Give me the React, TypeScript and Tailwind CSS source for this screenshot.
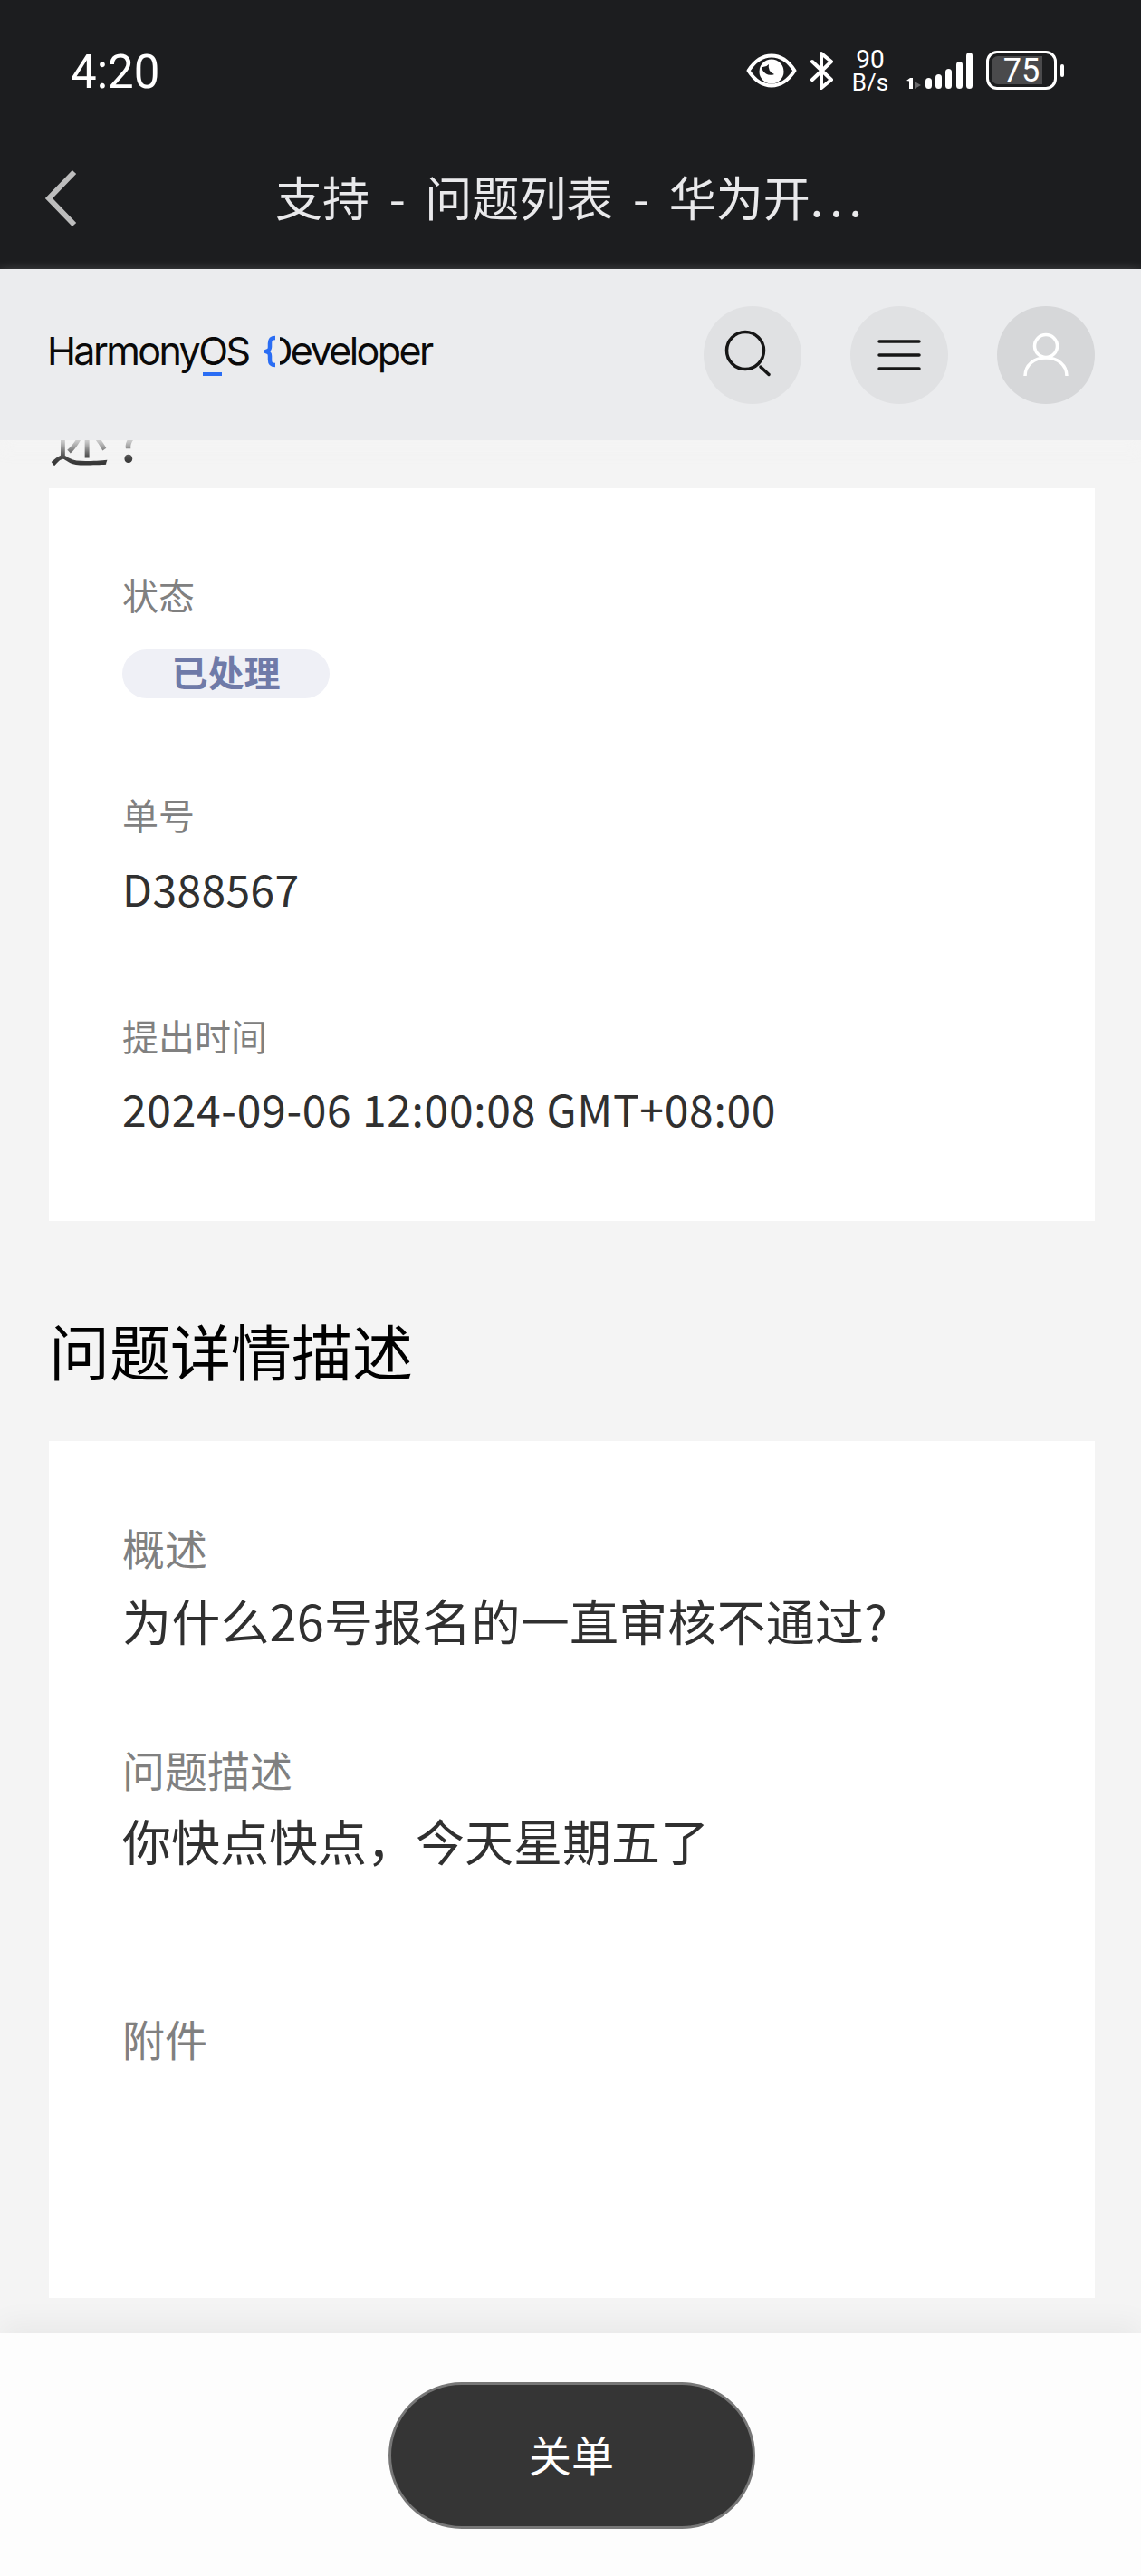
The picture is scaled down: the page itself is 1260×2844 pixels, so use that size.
const FONT = "font-['Noto_Sans_CJK_SC','Noto_Sans',sans-serif]";

function Label({ children, big, className = "" }: { children: string; big?: boolean; className?: string }) {
  return (
    <div className={`h-[60px] leading-[56px] text-[#808080] ${big ? "text-[47px]" : "text-[40px]"} ${className}`}>{children}</div>
  );
}

function StatusIcons() {
  return (
    <div className="flex items-start text-white">
      <svg width="56" height="38" viewBox="0 0 56 38" className="mt-[59px] ml-[-1px]">
        <path d="M2.500 19C10 7.500 18.500 2.500 28 2.500S46 7.500 53.500 19C46 30.500 37.500 35.500 28 35.500S10 30.500 2.500 19Z" fill="none" stroke="white" strokeWidth="4" strokeLinejoin="round" />
        <circle cx="28" cy="20" r="13.500" fill="white" />
        <path d="M17 15a10 10 0 0 0 14 8 9 9 0 0 1-6-11 9 9 0 0 1-8 3Z" fill="#1c1d1f" />
      </svg>
      <svg width="28" height="42" viewBox="0 0 28 42" className="mt-[57px] ml-[14px]">
        <path d="M3 11 24 31 13 40V2L24 11 3 31" fill="none" stroke="white" strokeWidth="4" strokeLinejoin="round" strokeLinecap="round" />
      </svg>
      <div className="mt-[54px] ml-[18px] w-[42px] text-center font-['Roboto',sans-serif]">
        <div className="h-[24px] text-[28px] leading-[24px]">90</div>
        <div className="h-[26px] text-[26px] leading-[26px] whitespace-nowrap">B/s</div>
      </div>
      <svg width="78" height="44" viewBox="0 0 78 44" className="mt-[56px] ml-[18px]">
        <path d="M1 33 5 30H8V42H4V33.500Z" fill="white" />
        <path d="M10 34V42L17 38Z" fill="#6a6a6c" />
        <rect x="22" y="30" width="7" height="12" rx="3.500" fill="white" />
        <rect x="33" y="26" width="7" height="16" rx="3.500" fill="white" />
        <rect x="44" y="20" width="7" height="22" rx="3.500" fill="white" />
        <rect x="56" y="12" width="7" height="30" rx="3.500" fill="white" />
        <rect x="67" y="2" width="7" height="40" rx="3.500" fill="white" />
      </svg>
      <div className="relative mt-[56px] ml-[11px] h-[43px] w-[78px] overflow-hidden rounded-[12px] border-[3px] border-white">
        <div className="absolute left-[3px] top-[3px] bottom-[3px] w-[56px] rounded-l-[7px] bg-[#4a4a4c]" />
        <div className="absolute inset-0 flex items-center justify-center font-['Roboto',sans-serif] text-[36px] leading-none">75</div>
      </div>
      <div className="mt-[71px] ml-[4px] h-[14px] w-[4px] rounded-full bg-white" />
    </div>
  );
}

function Logo() {
  return (
    <div className="mb-[9px] flex items-baseline font-['Inter',sans-serif] text-[43px] leading-[50px] tracking-[-2.600px] text-[#0a0a0a] whitespace-nowrap">
      <span className="relative">
        HarmonyOS
        <span className="absolute left-[172px] top-[49px] h-[4px] w-[21px] bg-[#2a6df4]" />
      </span>
      <span className="relative ml-[18px]">
        Developer
        <svg width="18" height="36" viewBox="0 0 18 36" className="absolute left-[-1px] top-[8px] bg-[#ebecee]">
          <path d="M13 3C8 3 7 5 7 9V13C7 16 6 17 3 18 6 19 7 20 7 23V27C7 31 8 33 13 33" fill="none" stroke="#2a6df4" strokeWidth="4.500" />
        </svg>
      </span>
    </div>
  );
}

export default function App() {
  return (
    <div className={`flex h-[2844px] w-[1260px] flex-col overflow-hidden bg-[#f4f4f4] ${FONT}`}>
      <div className="relative z-10 h-[297px] shrink-0 bg-[#1c1d1f]">
        <div className="flex justify-between pl-[78px] pr-[85px]">
          <div className="mt-[50px] font-['Roboto',sans-serif] text-[51px] leading-[60px] text-white">4:20</div>
          <StatusIcons />
        </div>
        <div className="mt-[78px] flex h-[62px] items-center pl-[49px]">
          <svg width="38" height="64" viewBox="0 0 38 64">
            <path d="M33 3 5 32l28 29" fill="none" stroke="#bdbdbd" strokeWidth="6" />
          </svg>
          <div className="mb-[4px] ml-[217px] text-[52px] leading-[62px] text-[#e9e9eb] whitespace-nowrap [word-spacing:10px]">
            支持 - 问题列表 - 华为开<span className="tracking-[7px]">...</span>
          </div>
        </div>
      </div>

      <header className="relative z-10 flex h-[189px] shrink-0 items-center justify-between bg-[#ebecee] pl-[52px] pr-[51px] shadow-[0_10px_16px_rgba(244,244,244,0.9)]">
        <Logo />
        <div className="flex gap-[54px]">
          <div className="flex h-[108px] w-[108px] items-center justify-center rounded-full bg-[#e0e1e3]">
            <svg width="108" height="108" viewBox="0 0 108 108">
              <circle cx="46" cy="49" r="20.500" fill="none" stroke="#161616" strokeWidth="3.500" />
              <path d="M63 67l9 8.500" fill="none" stroke="#161616" strokeWidth="3.500" strokeLinecap="round" />
            </svg>
          </div>
          <div className="flex h-[108px] w-[108px] items-center justify-center rounded-full bg-[#e0e1e3]">
            <svg width="108" height="108" viewBox="0 0 108 108">
              <path d="M32 39H76M32 54H76M32 69H76" fill="none" stroke="#161616" strokeWidth="3.500" strokeLinecap="round" />
            </svg>
          </div>
          <div className="flex h-[108px] w-[108px] items-center justify-center rounded-full bg-[#d6d7d9]">
            <svg width="108" height="108" viewBox="0 0 108 108">
              <circle cx="54" cy="44" r="12.500" fill="none" stroke="white" strokeWidth="3.500" />
              <path d="M31 77C31 65 41 57 54 57S77 65 77 77" fill="none" stroke="white" strokeWidth="3.500" />
            </svg>
          </div>
        </div>
      </header>

      <main className="min-h-0 flex-1 overflow-hidden pl-[54px] pr-[51px]">
        <div className="relative flex h-[53px] items-end overflow-hidden">
          <div className="mb-[18px] text-[67px] leading-[80px] tracking-[6px] text-[#333] whitespace-nowrap">述?</div>
        </div>

        <section className="bg-white px-[81px] pt-[89px] pb-[92px]">
          <Label>状态</Label>
          <div className="mt-[29px] flex h-[54px] w-[229px] items-center justify-center rounded-full bg-[#eff0f6] pb-[6px] text-[40px] font-bold text-[#6f7aa8]">已处理</div>
          <Label className="mt-[100px]">单号</Label>
          <div className="mt-[22px] h-[60px] text-[48px] leading-[54px] tracking-[0.400px] text-[#303030]">D388567</div>
          <Label className="mt-[102px]">提出时间</Label>
          <div className="mt-[21px] h-[60px] text-[48px] leading-[54px] tracking-[0.700px] text-[#303030] whitespace-nowrap">2024-09-06 12:00:08 GMT+08:00</div>
        </section>

        <h2 className="mt-[105px] mb-[58px] h-[80px] text-[67px] font-normal leading-[73px] text-black">问题详情描述</h2>

        <section className="bg-white px-[81px] pt-[89px] pb-[255px]">
          <Label big>概述</Label>
          <div className="mt-[16px] h-[70px] text-[54px] leading-[66px] tracking-[0.200px] text-[#303030] whitespace-nowrap">为什么26号报名的一直审核不通过?</div>
          <Label big className="mt-[99px]">问题描述</Label>
          <div className="mt-[14px] h-[70px] text-[54px] leading-[66px] text-[#303030] whitespace-nowrap">你快点快点，今天星期五了</div>
          <Label big className="mt-[153px]">附件</Label>
        </section>
      </main>

      <footer className="relative z-10 flex h-[268px] shrink-0 justify-center bg-[#fdfdfd] pt-[54px] shadow-[0_-10px_30px_rgba(0,0,0,0.05)]">
        <button className="ml-[2px] flex h-[162px] w-[405px] items-center justify-center rounded-full border-[3px] border-[#777] bg-[#353535] pb-[3px] text-[47px] text-white">关单</button>
      </footer>
    </div>
  );
}
